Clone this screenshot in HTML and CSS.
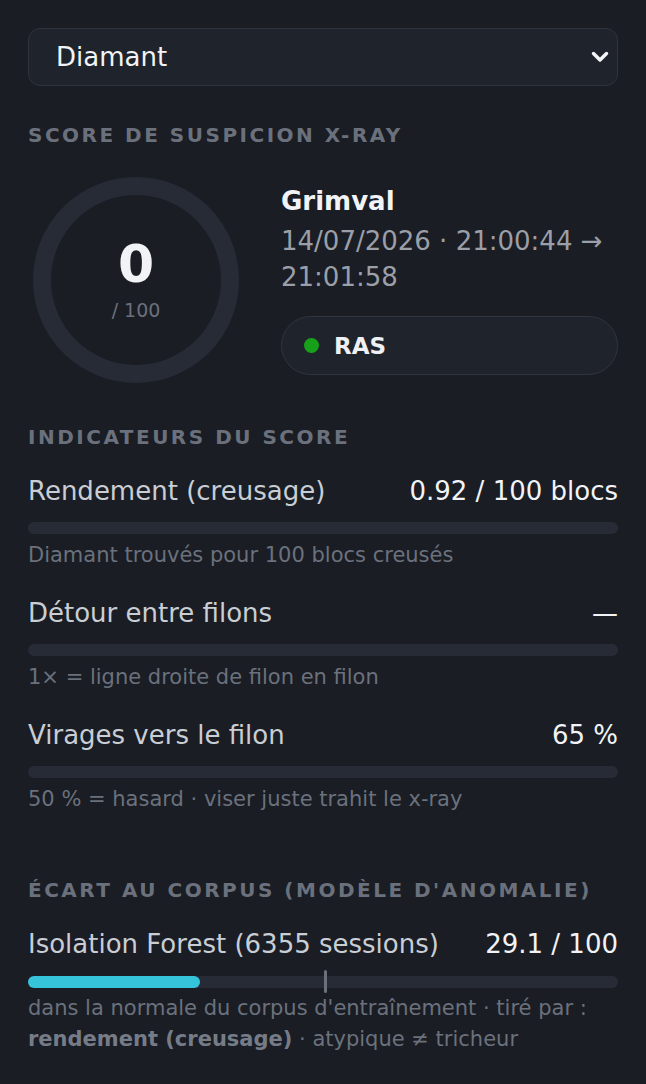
FILE: index.html
```html
<!DOCTYPE html>
<html lang="fr">
<head>
  <meta charset="UTF-8">
  <meta name="viewport" content="width=device-width, initial-scale=1.0">
  <title>Suspicion X-ray</title>
  <link rel="stylesheet" href="styles.css">
</head>
<body>
  <div class="panel">
    <div class="select-wrap">
      <select class="ore-select">
        <option>Diamant</option>
      </select>
      <svg class="chevron" width="18" height="12" viewBox="0 0 18 12"><polyline points="2.5,2.5 9,9 15.5,2.5" /></svg>
    </div>

    <section class="block">
      <h2 class="section-title">Score de suspicion X-ray</h2>
      <div class="score">
        <div class="gauge">
          <svg width="216" height="216" viewBox="0 0 216 216"><circle cx="108" cy="108" r="94" /></svg>
          <div class="gauge-text">
            <span class="gauge-num">0</span>
            <span class="gauge-max">/ 100</span>
          </div>
        </div>
        <div class="player">
          <div class="player-name">Grimval</div>
          <div class="player-date">14/07/2026 · 21:00:44 → 21:01:58</div>
          <div class="verdict"><span class="dot"></span>RAS</div>
        </div>
      </div>
    </section>

    <section class="block">
      <h2 class="section-title">Indicateurs du score</h2>
      <div class="metric">
        <div class="metric-head"><span class="metric-label">Rendement (creusage)</span><span class="metric-value">0.92 / 100 blocs</span></div>
        <div class="bar"></div>
        <p class="hint">Diamant trouvés pour 100 blocs creusés</p>
      </div>
      <div class="metric">
        <div class="metric-head"><span class="metric-label">Détour entre filons</span><span class="metric-value">—</span></div>
        <div class="bar"></div>
        <p class="hint">1× = ligne droite de filon en filon</p>
      </div>
      <div class="metric">
        <div class="metric-head"><span class="metric-label">Virages vers le filon</span><span class="metric-value">65 %</span></div>
        <div class="bar"></div>
        <p class="hint">50 % = hasard · viser juste trahit le x-ray</p>
      </div>
    </section>

    <section class="block">
      <h2 class="section-title">Écart au corpus (modèle d'anomalie)</h2>
      <div class="metric">
        <div class="metric-head"><span class="metric-label">Isolation Forest (6355 sessions)</span><span class="metric-value">29.1 / 100</span></div>
        <div class="bar bar-corpus">
          <div class="bar-fill" style="width: 29.1%"></div>
          <div class="bar-mark" style="left: 50%"></div>
        </div>
        <p class="hint hint-long">dans la normale du corpus d'entraînement · tiré par : <b>rendement (creusage)</b> · atypique ≠ tricheur</p>
      </div>
    </section>
  </div>
</body>
</html>
```

FILE: styles.css
```css
body {
  margin: 0;
  background: #1a1d24;
  font-family: "DejaVu Sans", sans-serif;
  color: #c9cdd4;
}
.panel {
  display: flex;
  flex-direction: column;
  gap: 37px;
  padding: 28px;
}

/* select */
.select-wrap {
  position: relative;
}
.ore-select {
  appearance: none;
  -webkit-appearance: none;
  display: block;
  width: 100%;
  height: 58px;
  padding: 0 0 0 27px;
  background: #1f232b;
  border: 1px solid #2e333c;
  border-radius: 12px;
  color: #f1f3f6;
  font-family: inherit;
  font-size: 26px;
}
.chevron {
  position: absolute;
  top: 23px;
  right: 9px;
  fill: none;
  stroke: #f1f3f6;
  stroke-width: 3.5;
  stroke-linecap: round;
  stroke-linejoin: round;
}

.section-title {
  margin: 0 0 26px;
  font-size: 20px;
  line-height: 24px;
  font-weight: bold;
  letter-spacing: 2.5px;
  text-transform: uppercase;
  color: #6b717c;
}

/* score */
.score {
  display: flex;
  align-items: center;
  gap: 37px;
  margin-top: -1px;
}
.gauge {
  position: relative;
  width: 216px;
  height: 216px;
  flex: none;
}
.gauge svg {
  display: block;
}
.gauge circle {
  fill: none;
  stroke: #262b35;
  stroke-width: 18;
}
.gauge-text {
  position: absolute;
  inset: 0;
  display: flex;
  flex-direction: column;
  align-items: center;
  justify-content: center;
}
.gauge-num {
  font-size: 52px;
  line-height: 52px;
  font-weight: bold;
  color: #f1f3f6;
}
.gauge-max {
  margin-top: 8px;
  font-size: 19px;
  line-height: 24px;
  color: #6b717c;
}
.player {
  flex: 1;
}
.player-name {
  margin-bottom: 6px;
  font-size: 26px;
  line-height: 32px;
  font-weight: bold;
  color: #f1f3f6;
}
.player-date {
  font-size: 26px;
  line-height: 36px;
  color: #9a9fa8;
}
.verdict {
  display: flex;
  align-items: center;
  gap: 15px;
  height: 59px;
  margin-top: 21px;
  padding-left: 22px;
  box-sizing: border-box;
  background: #1f232b;
  border: 1px solid #30353e;
  border-radius: 30px;
  font-size: 23px;
  font-weight: bold;
  color: #eef0f4;
}
.dot {
  width: 15px;
  height: 15px;
  border-radius: 50%;
  background: #17a11b;
}

/* metrics */
.metric {
  margin-bottom: 27px;
}
.metric-head {
  display: flex;
  justify-content: space-between;
  font-size: 26px;
  line-height: 32px;
}
.metric-label {
  color: #c9cdd4;
}
.metric-value {
  color: #f1f3f6;
}
.bar {
  position: relative;
  height: 12px;
  margin-top: 15px;
  border-radius: 6px;
  background: #262b35;
}
.bar-corpus {
  margin-top: 16px;
}
.bar-fill {
  height: 100%;
  border-radius: 6px;
  background: #35c4d9;
}
.bar-mark {
  position: absolute;
  top: -6px;
  width: 3px;
  height: 23px;
  margin-left: 1px;
  border-radius: 2px;
  background: #6b717c;
}
.hint {
  margin: 6px 0 0;
  font-size: 21px;
  line-height: 30px;
  color: #6b717c;
}
.hint-long {
  margin-top: 5px;
  line-height: 31px;
}
.hint b {
  color: #767c87;
}
```
